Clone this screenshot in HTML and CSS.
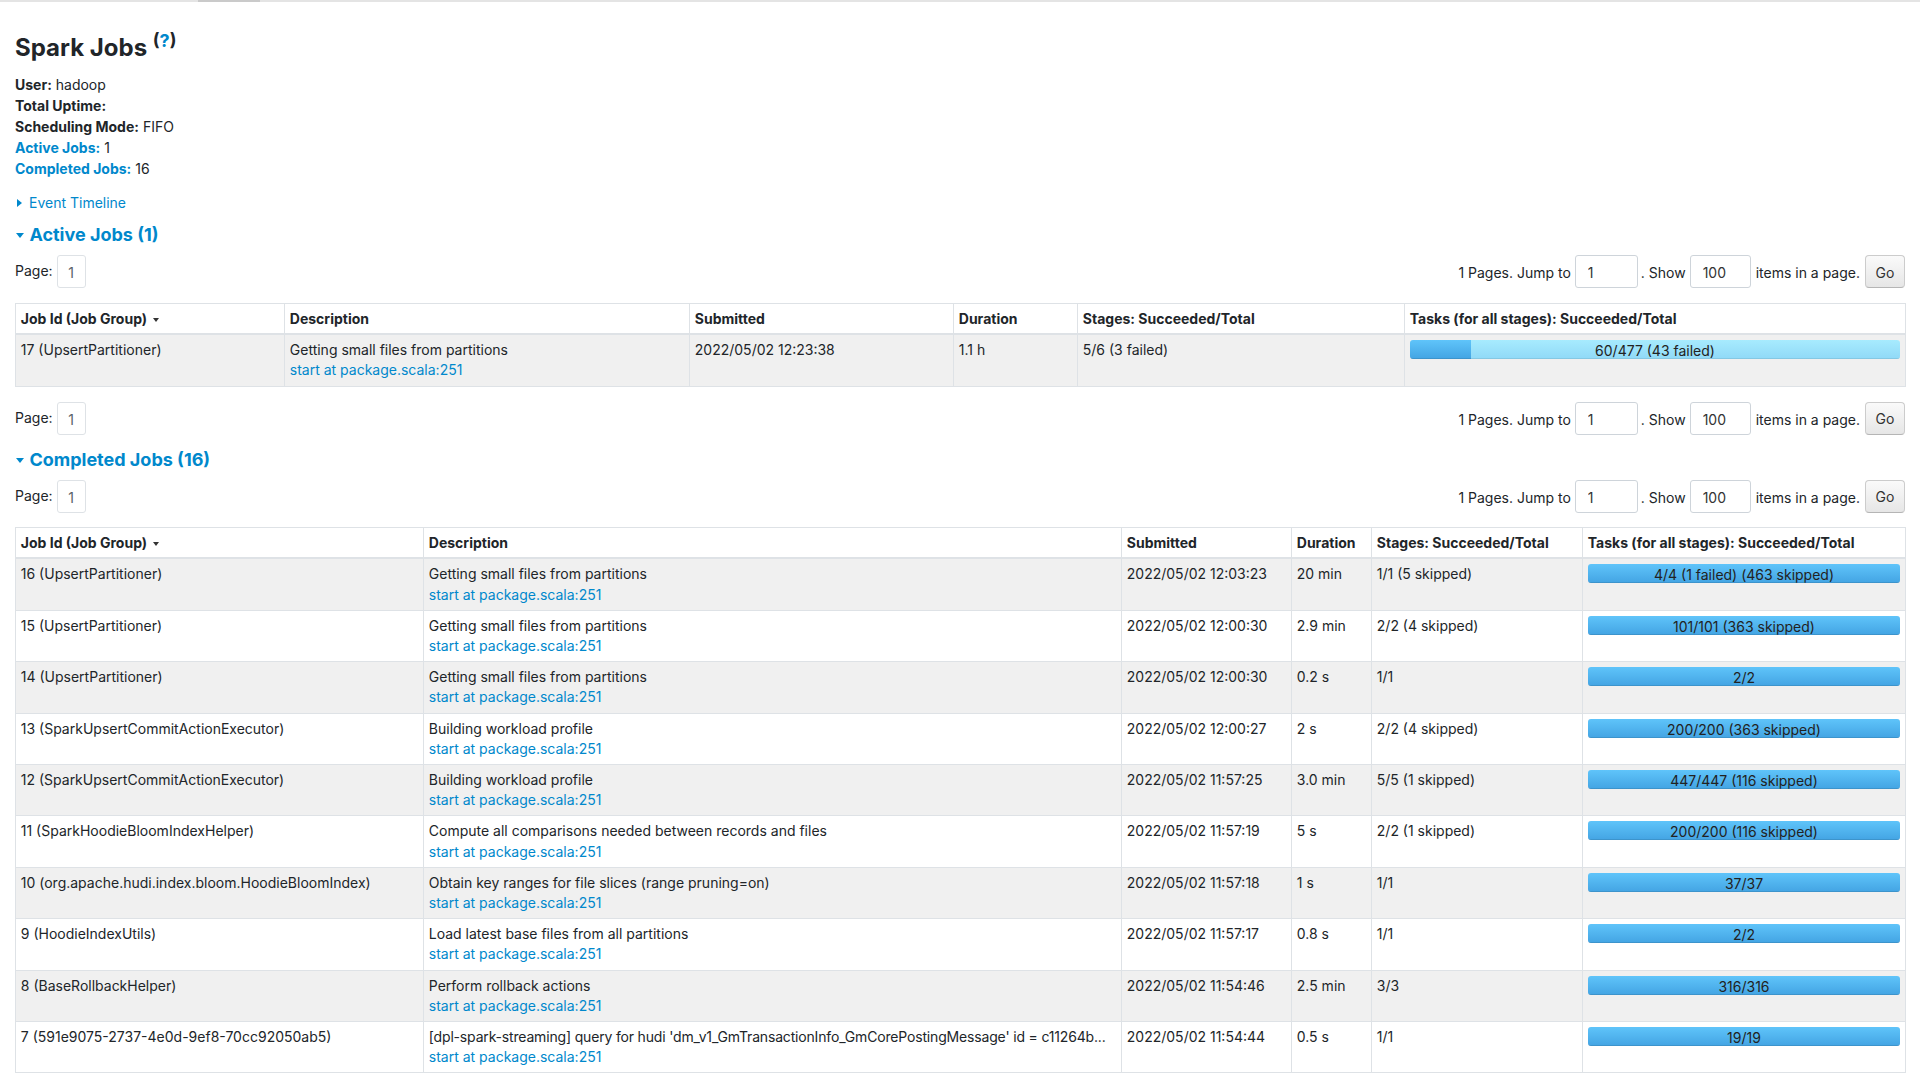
FILE: index.html
```html
<!DOCTYPE html>
<html lang="en">
<head>
<meta charset="utf-8">
<title>Spark Jobs</title>
<link rel="stylesheet" href="styles.css">
</head>
<body>
<div class="topbar"><span class="topbar-tab"></span></div>
<div class="page">
  <h3 class="title">Spark Jobs <sup class="help">(<a href="#">?</a>)</sup></h3>
  <ul class="summary">
    <li><strong>User:</strong> hadoop</li>
    <li><strong>Total Uptime:</strong></li>
    <li><strong>Scheduling Mode:</strong> FIFO</li>
    <li><a href="#"><strong>Active Jobs:</strong></a> 1</li>
    <li><a href="#"><strong>Completed Jobs:</strong></a> 16</li>
  </ul>
  <div class="timeline"><span class="arrow-right"></span><a href="#">Event Timeline</a></div>

  <h4 class="section-title"><span class="arrow-down"></span>Active Jobs (1)</h4>
  <div class="pager">
    <div class="pager-left"><span class="page-label">Page:</span><span class="page-num">1</span></div>
    <div class="pager-right">
      <span class="pager-text">1 Pages. Jump to</span>
      <input class="pager-input in-page" type="text" value="1">
      <span class="pager-text">. Show</span>
      <input class="pager-input in-size" type="text" value="100">
      <span class="pager-text">items in a page.</span>
      <button class="go" type="button">Go</button>
    </div>
  </div>
  <table class="jobs">
    <colgroup>
      <col class="a-id"><col class="a-desc"><col class="a-sub"><col class="a-dur"><col class="a-stage"><col class="a-task">
    </colgroup>
    <thead>
      <tr><th>Job Id (Job Group)<span class="sort"></span></th><th>Description</th><th>Submitted</th><th>Duration</th><th>Stages: Succeeded/Total</th><th>Tasks (for all stages): Succeeded/Total</th></tr>
    </thead>
    <tbody>
      <tr>
        <td>17 (UpsertPartitioner)</td>
        <td><span class="desc">Getting small files from partitions</span><a class="name-link" href="#">start at package.scala:251</a></td>
        <td>2022/05/02 12:23:38</td>
        <td>1.1 h</td>
        <td>5/6 (3 failed)</td>
        <td><div class="progress"><span class="progress-label">60/477 (43 failed)</span><div class="bar-done bar-left" style="width:12.58%"></div><div class="bar-running"></div></div></td>
      </tr>
    </tbody>
  </table>
  <div class="pager pager-after">
    <div class="pager-left"><span class="page-label">Page:</span><span class="page-num">1</span></div>
    <div class="pager-right">
      <span class="pager-text">1 Pages. Jump to</span>
      <input class="pager-input in-page" type="text" value="1">
      <span class="pager-text">. Show</span>
      <input class="pager-input in-size" type="text" value="100">
      <span class="pager-text">items in a page.</span>
      <button class="go" type="button">Go</button>
    </div>
  </div>

  <h4 class="section-title section-second"><span class="arrow-down"></span>Completed Jobs (16)</h4>
  <div class="pager">
    <div class="pager-left"><span class="page-label">Page:</span><span class="page-num">1</span></div>
    <div class="pager-right">
      <span class="pager-text">1 Pages. Jump to</span>
      <input class="pager-input in-page" type="text" value="1">
      <span class="pager-text">. Show</span>
      <input class="pager-input in-size" type="text" value="100">
      <span class="pager-text">items in a page.</span>
      <button class="go" type="button">Go</button>
    </div>
  </div>
  <table class="jobs jobs-completed">
    <colgroup>
      <col class="c-id"><col class="c-desc"><col class="c-sub"><col class="c-dur"><col class="c-stage"><col class="c-task">
    </colgroup>
    <thead>
      <tr><th>Job Id (Job Group)<span class="sort"></span></th><th>Description</th><th>Submitted</th><th>Duration</th><th>Stages: Succeeded/Total</th><th>Tasks (for all stages): Succeeded/Total</th></tr>
    </thead>
    <tbody>
      <tr>
        <td>16 (UpsertPartitioner)</td>
        <td><span class="desc">Getting small files from partitions</span><a class="name-link" href="#">start at package.scala:251</a></td>
        <td>2022/05/02 12:03:23</td><td>20 min</td><td>1/1 (5 skipped)</td>
        <td><div class="progress"><span class="progress-label">4/4 (1 failed) (463 skipped)</span><div class="bar-done bar-full"></div></div></td>
      </tr>
      <tr>
        <td>15 (UpsertPartitioner)</td>
        <td><span class="desc">Getting small files from partitions</span><a class="name-link" href="#">start at package.scala:251</a></td>
        <td>2022/05/02 12:00:30</td><td>2.9 min</td><td>2/2 (4 skipped)</td>
        <td><div class="progress"><span class="progress-label">101/101 (363 skipped)</span><div class="bar-done bar-full"></div></div></td>
      </tr>
      <tr>
        <td>14 (UpsertPartitioner)</td>
        <td><span class="desc">Getting small files from partitions</span><a class="name-link" href="#">start at package.scala:251</a></td>
        <td>2022/05/02 12:00:30</td><td>0.2 s</td><td>1/1</td>
        <td><div class="progress"><span class="progress-label">2/2</span><div class="bar-done bar-full"></div></div></td>
      </tr>
      <tr>
        <td>13 (SparkUpsertCommitActionExecutor)</td>
        <td><span class="desc">Building workload profile</span><a class="name-link" href="#">start at package.scala:251</a></td>
        <td>2022/05/02 12:00:27</td><td>2 s</td><td>2/2 (4 skipped)</td>
        <td><div class="progress"><span class="progress-label">200/200 (363 skipped)</span><div class="bar-done bar-full"></div></div></td>
      </tr>
      <tr>
        <td>12 (SparkUpsertCommitActionExecutor)</td>
        <td><span class="desc">Building workload profile</span><a class="name-link" href="#">start at package.scala:251</a></td>
        <td>2022/05/02 11:57:25</td><td>3.0 min</td><td>5/5 (1 skipped)</td>
        <td><div class="progress"><span class="progress-label">447/447 (116 skipped)</span><div class="bar-done bar-full"></div></div></td>
      </tr>
      <tr>
        <td>11 (SparkHoodieBloomIndexHelper)</td>
        <td><span class="desc">Compute all comparisons needed between records and files</span><a class="name-link" href="#">start at package.scala:251</a></td>
        <td>2022/05/02 11:57:19</td><td>5 s</td><td>2/2 (1 skipped)</td>
        <td><div class="progress"><span class="progress-label">200/200 (116 skipped)</span><div class="bar-done bar-full"></div></div></td>
      </tr>
      <tr>
        <td>10 (org.apache.hudi.index.bloom.HoodieBloomIndex)</td>
        <td><span class="desc">Obtain key ranges for file slices (range pruning=on)</span><a class="name-link" href="#">start at package.scala:251</a></td>
        <td>2022/05/02 11:57:18</td><td>1 s</td><td>1/1</td>
        <td><div class="progress"><span class="progress-label">37/37</span><div class="bar-done bar-full"></div></div></td>
      </tr>
      <tr>
        <td>9 (HoodieIndexUtils)</td>
        <td><span class="desc">Load latest base files from all partitions</span><a class="name-link" href="#">start at package.scala:251</a></td>
        <td>2022/05/02 11:57:17</td><td>0.8 s</td><td>1/1</td>
        <td><div class="progress"><span class="progress-label">2/2</span><div class="bar-done bar-full"></div></div></td>
      </tr>
      <tr>
        <td>8 (BaseRollbackHelper)</td>
        <td><span class="desc">Perform rollback actions</span><a class="name-link" href="#">start at package.scala:251</a></td>
        <td>2022/05/02 11:54:46</td><td>2.5 min</td><td>3/3</td>
        <td><div class="progress"><span class="progress-label">316/316</span><div class="bar-done bar-full"></div></div></td>
      </tr>
      <tr>
        <td>7 (591e9075-2737-4e0d-9ef8-70cc92050ab5)</td>
        <td><span class="desc desc-long">[dpl-spark-streaming] query for hudi 'dm_v1_GmTransactionInfo_GmCorePostingMessage' id = c11264b...</span><a class="name-link" href="#">start at package.scala:251</a></td>
        <td>2022/05/02 11:54:44</td><td>0.5 s</td><td>1/1</td>
        <td><div class="progress"><span class="progress-label">19/19</span><div class="bar-done bar-full"></div></div></td>
      </tr>
    </tbody>
  </table>
</div>
</body>
</html>
```
FILE: styles.css
```css
* { box-sizing: border-box; }
html, body { margin: 0; padding: 0; background: #ffffff; }
body {
  font-family: Inter, "Liberation Sans", Arial, sans-serif;
  font-size: 14px;
  line-height: 21px;
  color: #212529;
}
a { color: #0088cc; text-decoration: none; }

.topbar { height: 2px; background: #e4e4e4; display: flex; }
.topbar-tab { margin-left: 198px; width: 62px; background: #cacaca; }

.page { padding: 0 15px 0 15px; }

.title {
  margin: 31px 0 0 0;
  font-size: 24px;
  line-height: 30px;
  font-weight: 700;
  color: #212529;
}
.help { font-size: 18px; line-height: 0; vertical-align: 9px; font-weight: 700; color: #212529; }
.help a { color: #0088cc; }

.summary { list-style: none; margin: 11px 0 0 0; padding: 0; }
.summary li { line-height: 21px; }
.summary strong { font-weight: 700; }

.timeline { margin-top: 13px; display: flex; align-items: center; height: 21px; }
.arrow-right {
  width: 0; height: 0;
  border-top: 4.5px solid transparent;
  border-bottom: 4.5px solid transparent;
  border-left: 5px solid #0088cc;
  margin: 0 7px 0 2px;
}

.section-title {
  margin: 10px 0 0 0;
  font-size: 18px;
  line-height: 24px;
  font-weight: 700;
  color: #0088cc;
  display: flex;
  align-items: center;
}
.section-second { margin-top: 13px; }
.arrow-down {
  width: 0; height: 0;
  border-left: 4.3px solid transparent;
  border-right: 4.3px solid transparent;
  border-top: 5.5px solid #0088cc;
  margin: 1px 5.7px 0 0.7px;
}

.pager {
  display: flex;
  justify-content: space-between;
  align-items: center;
  height: 33px;
  margin-top: 8px;
}
.pager-after { margin-top: 15px; }
.pager-left { display: flex; align-items: center; gap: 4px; }
.page-label { margin-bottom: 2px; }
.page-num {
  width: 29px; height: 33px;
  border: 1px solid #dee2e6;
  border-radius: 3px;
  display: flex; align-items: center; justify-content: center;
  padding-top: 2px;
  color: #5a6268;
}
.pager-right { display: flex; align-items: center; }
.pager-text { padding-top: 2px; white-space: nowrap; }
.pager-input {
  height: 33px;
  border: 1px solid #ced4da;
  border-radius: 3px;
  padding: 2px 0 0 12px;
  font: inherit;
  color: #333333;
  background: #ffffff;
  outline: none;
}
.in-page { width: 63px; margin: 0 3px 0 4px; }
.in-size { width: 61px; margin: 0 5px 0 4px; }
.go {
  width: 40px; height: 33px;
  margin-left: 5px;
  padding: 1px 0 0 0;
  border: 1px solid #cccccc;
  border-bottom-color: #b5b5b5;
  border-radius: 4px;
  background: linear-gradient(#fafafa, #e6e6e6);
  font: inherit;
  color: #333333;
}

.jobs {
  width: 100%;
  border-collapse: collapse;
  table-layout: fixed;
  margin-top: 15px;
}
.jobs-completed { margin-top: 14.5px; }
.jobs th, .jobs td {
  border: 1px solid #dee2e6;
  padding: 5px 4.8px;
  text-align: left;
  vertical-align: top;
  line-height: 20.2px;
}
.jobs th {
  padding: 4.5px 4.8px;
  font-weight: 700;
  border-bottom: 2px solid #dee2e6;
  background: #ffffff;
}
.jobs tbody tr:nth-child(odd) td { background: #f0f0f0; }
.jobs tbody tr:nth-child(even) td { background: #ffffff; }

.sort {
  display: inline-block;
  width: 0; height: 0;
  border-left: 3px solid transparent;
  border-right: 3px solid transparent;
  border-top: 4.5px solid #333333;
  margin-left: 6px;
  vertical-align: 2px;
}

.a-id { width: 269px; }
.a-desc { width: 405px; }
.a-sub { width: 264px; }
.a-dur { width: 124px; }
.a-stage { width: 327px; }
.a-task { width: 501px; }

.c-id { width: 408px; }
.c-desc { width: 698px; }
.c-sub { width: 170px; }
.c-dur { width: 80px; }
.c-stage { width: 211px; }
.c-task { width: 323px; }

.desc { display: block; white-space: nowrap; overflow: hidden; text-overflow: ellipsis; }
.desc-long { letter-spacing: -0.17px; }
.name-link { display: block; }

.progress {
  position: relative;
  display: flex;
  height: 19px;
  border-radius: 3px;
  overflow: hidden;
  background: #f5f5f5;
  box-shadow: inset 0 -1px 0 rgba(0, 0, 0, 0.12);
}
.progress-label {
  position: absolute;
  left: 0; right: 0; top: 0;
  text-align: center;
  line-height: 19px;
  padding-top: 1px;
  color: #222222;
  white-space: nowrap;
  z-index: 1;
}
.bar-done {
  height: 100%;
  background: linear-gradient(#5fc4fa, #43a4e3);
  box-shadow: inset 0 -1px 0 rgba(0, 0, 0, 0.10);
}
.bar-full { flex: 1 1 auto; }
.bar-running {
  flex: 1 1 auto;
  height: 100%;
  background: linear-gradient(#a7ebfe, #90d9f7);
  box-shadow: inset 0 -1px 0 rgba(0, 0, 0, 0.08);
}
```
